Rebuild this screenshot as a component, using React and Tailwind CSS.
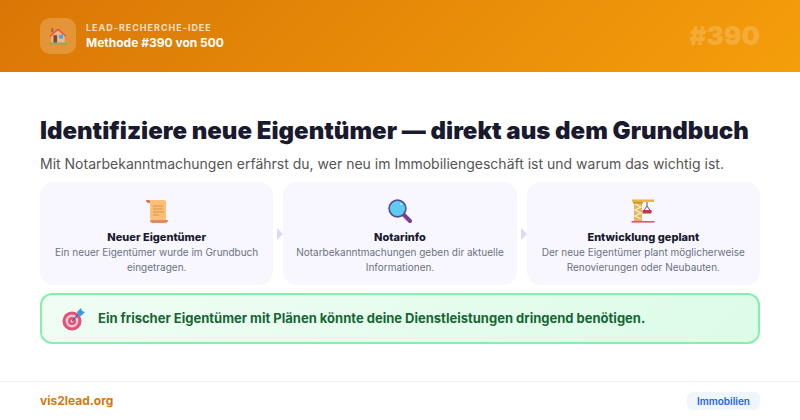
const House = () => (
  <svg viewBox="0 0 24 24" className="w-5 h-5">
    <rect x="4" y="2.5" width="2.4" height="5" fill="#a1654a" />
    <path d="M4 11 L12 3.5 L20 11 V20 H4 Z" fill="#f3b489" />
    <path d="M1.8 12 L12 2.8 L22.2 12 L20.9 13 L12 5.2 L3.1 13 Z" fill="#e5533d" />
    <rect x="6.5" y="11" width="4.4" height="9" fill="#7b4a3a" />
    <rect x="13.4" y="10.5" width="4.6" height="4.6" fill="#3ba7f0" />
    <rect x="1.5" y="20" width="21" height="2" fill="#56c271" />
  </svg>
);
const Scroll = () => (
  <svg viewBox="0 0 24 24" className="w-6 h-6">
    <path d="M1 1 H6 V4 H3 Q1 3 1 1 Z" fill="#c9704f" />
    <path d="M3 1 H19 Q21 1 21 3 V21 H7 Q5 21 5 19 V3 Q5 1 3 1 Z" fill="#fbbf76" />
    <path d="M5 21 H23 Q23 24 20 24 H8 Q5 24 5 21 Z" fill="#e08a5e" />
    <g stroke="#e98a4c" strokeWidth="1">
      <path d="M8 7 H18" /><path d="M8 10 H18" /><path d="M8 13 H19" /><path d="M8 16 H14" />
    </g>
  </svg>
);
const Lens = () => (
  <svg viewBox="0 0 24 24" className="w-6 h-6">
    <path d="M15 15 L22 22" stroke="#7b3f8c" strokeWidth="4" strokeLinecap="round" />
    <circle cx="9.5" cy="9.5" r="8.4" fill="#5ccdf0" stroke="#5a4a94" strokeWidth="1.6" />
    <circle cx="13" cy="5" r="1" fill="#bfeefb" />
  </svg>
);
const Crane = () => (
  <svg viewBox="0 0 24 24" className="w-6 h-6">
    <rect x="3" y="2" width="8" height="20" fill="#e6b65c" />
    <path d="M4 5 L10 8 L4 11 L10 14 L4 17 L10 20" stroke="#fbeec8" strokeWidth="1.3" fill="none" />
    <rect x="1" y="0.5" width="22" height="2.4" fill="#e8b43f" />
    <rect x="2" y="3" width="10" height="1.4" fill="#c98f2e" />
    <path d="M16 3 V7 M16 7 L12.5 12 M16 7 L19.5 12" stroke="#5b5570" strokeWidth="1" fill="none" />
    <rect x="11.5" y="11" width="9" height="3.5" fill="#c8324b" />
    <rect x="0.5" y="22" width="23" height="1.6" fill="#e9506b" />
  </svg>
);
const Target = () => (
  <svg viewBox="0 0 24 24" className="w-6 h-6">
    <circle cx="10" cy="14" r="9.5" fill="#e0527a" />
    <circle cx="10" cy="14" r="6.4" fill="#f4c6d2" />
    <circle cx="10" cy="14" r="4" fill="#e0527a" />
    <circle cx="10" cy="14" r="1.5" fill="#f4c6d2" />
    <path d="M10 14 L19 5" stroke="#456a92" strokeWidth="1.3" />
    <path d="M15 5 L19 1 L20 4 L23 5 L19 9 L16 8 Z" fill="#3b9ae8" />
  </svg>
);

const steps = [
  { icon: <Scroll />, title: "Neuer Eigentümer", text: "Ein neuer Eigentümer wurde im Grundbuch eingetragen." },
  { icon: <Lens />, title: "Notarinfo", text: "Notarbekanntmachungen geben dir aktuelle Informationen." },
  { icon: <Crane />, title: "Entwicklung geplant", text: "Der neue Eigentümer plant möglicherweise Renovierungen oder Neubauten." },
];

const Arrow = () => (
  <div className="w-[10px] shrink-0 flex items-center justify-end">
    <div className="w-0 h-0 border-y-[6px] border-y-transparent border-l-[6px] border-l-[#ddd6fe]" />
  </div>
);

export default function App() {
  return (
    <div className="w-[800px] h-[420px] bg-white flex flex-col overflow-hidden font-['Inter',sans-serif]">
      <header className="h-[72px] shrink-0 px-10 flex items-center justify-between bg-[linear-gradient(135deg,#d97706,#f59e0b)]">
        <div className="flex items-center gap-[10px]">
          <div className="w-9 h-9 rounded-[10px] bg-white/20 flex items-center justify-center">
            <House />
          </div>
          <div className="flex flex-col">
            <span className="text-[9px] font-bold tracking-[0.98px] leading-[12px] text-white/75 uppercase">Lead-Recherche-Idee</span>
            <span className="text-[12px] font-bold leading-[15px] text-white mt-[1px]">Methode #390 von 500</span>
          </div>
        </div>
        <span className="text-[26px] font-black leading-none text-white/20">#390</span>
      </header>
      <main className="flex-1 px-10 flex flex-col pt-[44px]">
        <h1 className="text-[24px] font-black leading-[30px] text-[#1a1a2e] whitespace-nowrap">Identifiziere neue Eigentümer — direkt aus dem Grundbuch</h1>
        <p className="text-[14px] leading-[18px] text-[#555555] mt-[9px] whitespace-nowrap">Mit Notarbekanntmachungen erfährst du, wer neu im Immobiliengeschäft ist und warum das wichtig ist.</p>
        <div className="flex mt-[9px] h-[103px]">
          {steps.map((s, i) => (
            <div key={s.title} className="contents">
              {i > 0 && <Arrow />}
              <div className="flex-1 min-w-0 rounded-[14px] bg-[#f8f7ff] px-[12px] pt-[17px] flex flex-col items-center text-center">
                {s.icon}
                <div className="text-[11px] font-extrabold leading-[14px] text-[#1a1a2e] mt-[7px]">{s.title}</div>
                <div className="text-[10px] leading-[14.5px] text-[#6b7280] mt-[1px]">{s.text}</div>
              </div>
            </div>
          ))}
        </div>
        <div className="mt-2 h-[51px] rounded-[12px] border-2 border-[#86efac] bg-[linear-gradient(135deg,#f0fdf4,#dcfce7)] px-[20px] flex items-center gap-[12px]">
          <Target />
          <span className="text-[13px] font-bold text-[#166534] whitespace-nowrap">Ein frischer Eigentümer mit Plänen könnte deine Dienstleistungen dringend benötigen.</span>
        </div>
      </main>
      <footer className="h-[39px] shrink-0 border-t border-[#f0f0f0] px-10 flex items-center justify-between">
        <span className="text-[12px] font-bold text-[#d97706]">vis2lead.org</span>
        <span className="text-[10px] font-semibold text-[#2563eb] bg-[#eff6ff] rounded-[6px] px-[10px] py-[3px] leading-[12px]">Immobilien</span>
      </footer>
    </div>
  );
}
